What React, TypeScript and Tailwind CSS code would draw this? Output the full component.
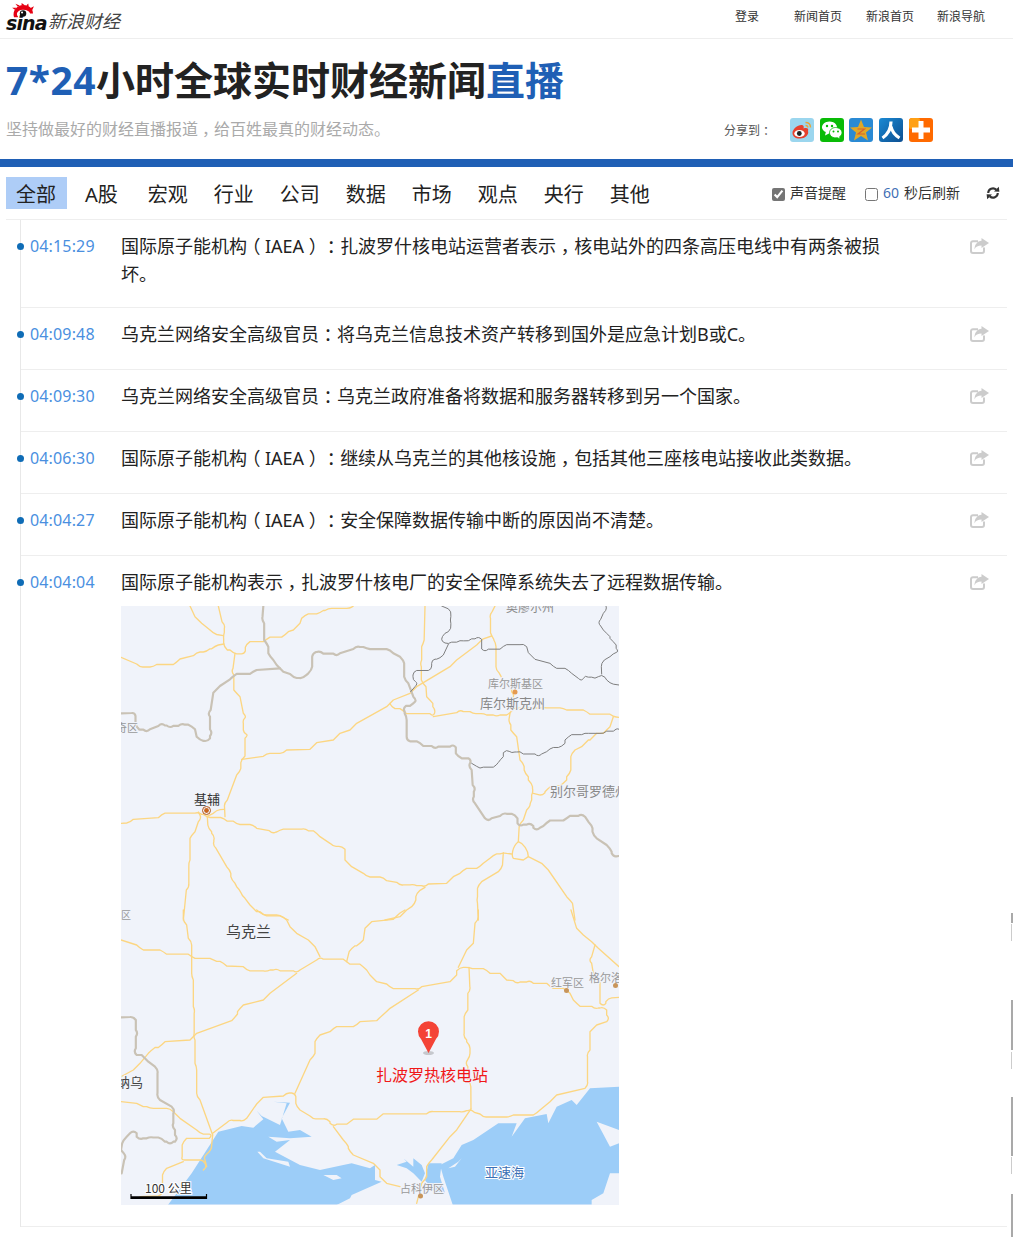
import React from "react";

const FONT = { fontFamily: '"Noto Sans", "Noto Sans CJK SC", sans-serif' };

function Punct({ text }: { text: string }) {
  const parts = text.split(/([（）：，])/);
  return (
    <>
      {parts.map((p, i) =>
        /^[（）：，]$/.test(p) ? (
          <span key={i} className="px-[0.25em] [font-feature-settings:'halt']">{p}</span>
        ) : (
          <React.Fragment key={i}>{p}</React.Fragment>
        )
      )}
    </>
  );
}

const ROWS = [
  { t: "04:15:29", x: "国际原子能机构（IAEA）：扎波罗什核电站运营者表示，核电站外的四条高压电线中有两条被损坏。", pb: "pb-[19px]" },
  { t: "04:09:48", x: "乌克兰网络安全高级官员：将乌克兰信息技术资产转移到国外是应急计划B或C。", pb: "pb-[21px]" },
  { t: "04:09:30", x: "乌克兰网络安全高级官员：乌克兰政府准备将数据和服务器转移到另一个国家。", pb: "pb-[21px]" },
  { t: "04:06:30", x: "国际原子能机构（IAEA）：继续从乌克兰的其他核设施，包括其他三座核电站接收此类数据。", pb: "pb-[21px]" },
  { t: "04:04:27", x: "国际原子能机构（IAEA）：安全保障数据传输中断的原因尚不清楚。", pb: "pb-[21px]" },
];

const TABS = ["全部", "A股", "宏观", "行业", "公司", "数据", "市场", "观点", "央行", "其他"];

const ROADS_TOP = [
  "M210,18 L235,60 L280,100 L310,107",
  "M295,18 L316,75 L310,107 L312,140 L340,160 L372,163 L380,132 L440,118 L495,105 L530,80 L555,45 L600,38 L625,25 L690,25 L700,18",
  "M3,172 L60,202 L100,200 L170,187 L230,157 L260,155 L285,138 L312,132",
  "M345,160 L333,215 L350,280 L380,350 L368,360 L372,400 L385,405 L365,478 L360,515 L312,610 L315,650",
  "M365,478 L440,460 L490,460 L580,438 L650,410 L700,380 L810,310 L880,270 L1000,190 L1080,125 L1115,108",
  "M915,18 L910,130 L900,190 L908,250 L930,300 L947,330 L940,350 L850,332 L815,320 L810,310",
  "M1125,18 L1108,45 L1115,108 L1128,130 L1128,210 L1165,260 L1185,285 L1170,340 L1130,350 L1090,340 L1060,342 L1020,328 L940,350",
  "M1170,340 L1165,365 L1180,400 L1210,490 L1215,520 L1235,550 L1240,575 L1230,610 L1230,620 L1200,670 L1195,725",
  "M1180,325 L1270,322 L1330,325 L1400,335 L1480,350 L1497,352",
  "M1480,350 L1460,390 L1420,410 L1395,430 L1355,460 L1350,520 L1330,550 L1285,565 L1265,588 L1240,580",
  "M3,670 L30,668 L125,643 L235,636 L260,650 L312,655 L350,672 L400,675 L458,702 L480,690 L555,685 L590,700 L640,740 L665,738 L685,790 L740,830 L790,832 L840,857 L880,852 L915,862 L990,840 L1030,810 L1080,800 L1120,765 L1150,758 L1175,762",
  "M235,636 L245,655 L215,705 L205,790 L208,860 L190,960",
  "M262,650 L265,685 L285,710 L278,735 L330,810 L335,840 L360,870 L365,885 L400,925 L430,945 L480,945 L505,960",
  "M1150,758 L1145,805 L1075,855 L1070,900 L1075,960",
  "M1195,725 C1175,740 1175,770 1180,775 L1210,780 L1225,770 C1225,750 1210,730 1195,725",
  "M1225,770 L1275,800 L1350,900 L1365,960",
  "M915,862 L890,880 L885,910 L850,940 L795,960",
  "M260,650 L290,630 L312,628",
];

const BORDERS_TOP = [
  "M430,18 L425,60 L440,130 L450,170 L480,205 L520,232 L548,236 L575,210 L578,160 L600,152 L650,170 L710,137 L740,145 L810,150 L850,180 L855,240 L890,300 L880,310 L848,325 L860,350 L860,420 L900,428 L945,448 L1000,432 L1015,470 L1055,480 L1045,500 L1068,565 L1055,600 L1105,665 L1150,638 L1185,645 L1200,680 L1230,668 L1250,693 L1280,668 L1340,655 L1385,640 L1415,675 L1420,705 L1470,745 L1480,770 L1497,768",
  "M480,205 L400,215 L340,228 L290,268 L262,340 L278,398 L262,425 L240,420 L215,378 L185,370 L150,385 L125,368 L80,398 L48,380 L45,338 L3,340",
];

const THIN_TOP = [
  "M965,18 L995,35 L990,60 L995,85 L965,110 L965,125 L985,133 L1020,120 L1045,125 L1075,108 L1095,157 L1150,138 L1210,130 L1235,168 L1300,200 L1345,210 L1385,245 L1395,225 L1425,238 L1445,222 L1470,250 L1497,255",
  "M985,133 L960,175 L935,180 L935,208 L880,215 L878,240 L895,250 L872,275",
  "M1445,222 L1443,190 L1480,160 L1497,155 L1480,125 L1460,100 L1432,68 L1460,30 L1458,18",
  "M1055,490 L1080,508 L1130,495 L1140,480 L1160,448 L1175,460 L1200,452 L1255,472 L1290,445 L1325,440 L1345,410 L1395,398 L1450,402 L1490,385 L1497,388",
];

const ROADS_BOTTOM = [
  "M190,0 L190,35 L215,95 L215,200 L225,300 L220,380 L230,470 L230,560 L278,675",
  "M3,90 L60,115 L130,125 L215,140 L280,150 L310,158 L380,180 L440,185 L470,175 L530,190 L600,140 L680,155 L730,170 L760,205 L810,232 L895,240 L1000,205 L1020,172 L1047,172 L1100,180 L1150,200 L1190,222 L1230,210 L1290,230 L1340,240 L1370,280 L1425,298 L1450,290 L1470,325 L1420,355 L1400,430 L1405,525 L1300,565 L1250,610 L1170,620 L1090,622 L1053,597 L1030,607 L930,603 L780,620 L690,635 L640,650 L620,625 L580,628 L530,590 L525,550 L500,548 L420,572 L370,635 L330,628 L278,670",
  "M410,0 L430,15 L490,20 L520,60 L575,100 L600,140",
  "M855,0 L830,18 L745,45 L720,100 L695,115 L680,155",
  "M1075,0 L1075,30 L1050,110 L1015,172",
  "M530,190 L440,260 L360,295 L345,322 L220,380 L125,405 L95,420 L50,470 L3,500",
  "M895,240 L800,305 L780,322 L710,345 L640,355 L590,385 L580,440 L525,550",
  "M1047,172 L1052,240 L1035,310 L1030,380 L1050,405 L1050,440 L1035,460 L1052,520 L1053,597",
  "M1353,0 L1380,65 L1425,105 L1497,170",
  "M1425,105 L1405,150 L1430,200 L1450,290 L1465,265 L1497,262",
  "M1053,597 L1000,670 L925,760 L915,810 L890,880",
  "M640,650 L680,700 L690,725 L770,770 L790,810 L840,830",
  "M3,575 L60,585 L90,595 L150,595 L170,615 L240,670 L278,675 L190,695 L183,750 L250,750 L260,770 L250,780",
  "M278,675 L270,725 L250,740 L260,770",
  "M190,755 L130,785 L125,855 L60,860",
];

const BORDERS_BOTTOM = [
  "M3,322 L40,320 L55,370 L40,425 L75,445 L115,480 L110,560 L165,600 L155,650 L175,685 L150,705 L125,685 L90,680 L60,690 L40,660 L10,690 L3,720",
  "M3,720 L20,740 L5,790",
];

function smooth(d: string) {
  if (d.includes("C")) return d;
  const n = d.match(/-?\d+(\.\d+)?/g)!.map(Number);
  const pts: [number, number][] = [];
  for (let i = 0; i < n.length; i += 2) pts.push([n[i], n[i + 1]]);
  let out = `M${pts[0][0]},${pts[0][1]}`;
  for (let i = 1; i < pts.length - 1; i++) {
    const mx = (pts[i][0] + pts[i + 1][0]) / 2;
    const my = (pts[i][1] + pts[i + 1][1]) / 2;
    const sx = pts[i][0] - Math.sign(pts[i][0] - pts[i - 1][0]) * Math.min(10, Math.abs(pts[i][0] - pts[i - 1][0]) / 2);
    const sy = pts[i][1] - Math.sign(pts[i][1] - pts[i - 1][1]) * Math.min(10, Math.abs(pts[i][1] - pts[i - 1][1]) / 2);
    const ex = pts[i][0] + Math.sign(mx - pts[i][0]) * Math.min(10, Math.abs(mx - pts[i][0]));
    const ey = pts[i][1] + Math.sign(my - pts[i][1]) * Math.min(10, Math.abs(my - pts[i][1]));
    out += ` L${sx},${sy} Q${pts[i][0]},${pts[i][1]} ${ex},${ey}`;
  }
  const last = pts[pts.length - 1];
  return out + ` L${last[0]},${last[1]}`;
}

function Logo() {
  return (
    <div className="relative ml-[6px] h-[38px] w-[120px]">
      <svg viewBox="0 0 24 20" className="absolute left-[6px] top-[3px] h-[19px] w-[23px]">
        <g fill="#e60012">
          <path d="M2 15 C0 8 5 2 12 2 C18 2 22 6 22 11 L19 11 C17 6 7 6 6 15 Z" />
          <path d="M3 7 L0 5 L4.5 5 Z M6 4 L3.5 0.8 L8 2.5 Z M10 2.5 L10 0 L13 2 Z M15 2.5 L17 0.5 L17.5 4 Z M19 5.5 L23 3.5 L21 8 Z" />
        </g>
        <ellipse cx="11.5" cy="11.5" rx="6.5" ry="4.5" fill="#fff" />
        <circle cx="11.5" cy="11" r="3.4" fill="#111" />
        <circle cx="10.5" cy="10" r="1.1" fill="#fff" />
      </svg>
      <span
        className="absolute left-0 top-[12px] text-[19px] font-bold italic leading-[22px] tracking-[-0.9px] text-[#111]"
        style={{ fontFamily: '"DejaVu Sans", sans-serif' }}
      >
        sina
      </span>
      <span className="absolute left-[42px] top-[10px] text-[18px] italic leading-[22px] text-[#444]">新浪财经</span>
    </div>
  );
}

function SocialIcons() {
  const box = "h-[24px] w-[24px] shrink-0 rounded-[3px]";
  return (
    <div className="flex">
      <svg viewBox="0 0 24 24" className={`${box} bg-[#9bd6ee]`}>
        <path d="M15.5 4.5 C18.5 4.5 20.5 6.5 20.5 9.5 M15.5 7.5 C16.8 7.5 17.8 8.3 17.8 9.6" fill="none" stroke="#e8a53a" strokeWidth="1.4" />
        <path d="M2.5 15 C2.5 11 8 6.5 12 7 C14 7.5 14 9 13.5 10.5 C17 9.5 19 10.5 18 13 C19.5 17 14 21 9.5 20.5 C5.5 20.5 2.5 18.5 2.5 15 Z" fill="#e6412d" />
        <ellipse cx="9.5" cy="15.5" rx="5.2" ry="3.6" fill="#fff" />
        <circle cx="9.3" cy="15.5" r="2.4" fill="#222" />
      </svg>
      <svg viewBox="0 0 24 24" className={`${box} ml-[6px] bg-[#09bb07]`}>
        <path d="M9.5 3.5 C14 3.5 17 6.3 17 9.5 C17 12.7 14 15.3 9.5 15.3 L5 17.5 L5.8 14 C3.5 13 2 11.3 2 9.5 C2 6.3 5 3.5 9.5 3.5 Z" fill="#fff" />
        <circle cx="7" cy="8" r="1.2" fill="#09bb07" />
        <circle cx="12" cy="8" r="1.2" fill="#09bb07" />
        <path d="M15.5 9.5 C19.2 9.5 22 12 22 14.8 C22 16.4 21 17.8 19.6 18.7 L20.2 21 L17.4 19.7 C13 20.5 9.5 18 9.5 14.8 C9.5 12 12 9.5 15.5 9.5 Z" fill="#fff" stroke="#09bb07" strokeWidth="0.8" />
        <circle cx="13.5" cy="13.5" r="1" fill="#09bb07" />
        <circle cx="18" cy="13.5" r="1" fill="#09bb07" />
      </svg>
      <svg viewBox="0 0 24 24" className={`${box} ml-[5px] bg-[#2a8ad4]`}>
        <path d="M12 1.5 L15 9 L23 9.5 L17 14.5 L19 22.5 L12 18 L5 22.5 L7 14.5 L1 9.5 L9 9 Z" fill="#e0a828" />
        <path d="M8.5 11 H15.5 L9 16 H16" fill="none" stroke="#d9622b" strokeWidth="1.2" />
      </svg>
      <svg viewBox="0 0 24 24" className={`${box} ml-[6px] bg-gradient-to-br from-[#1b8ad4] to-[#0d4f91]`}>
        <path d="M12 3.5 C12 11 8.5 16.5 3.5 20 M12 8.5 C13 14 16.5 17.5 20.5 20" fill="none" stroke="#fff" strokeWidth="3.2" />
      </svg>
      <svg viewBox="0 0 24 24" className={`${box} ml-[6px] bg-[#ff6a00]`}>
        <rect width="11" height="11" fill="#ffa015" rx="2" />
        <path d="M12 3 V21 M3 12 H21" stroke="#fff" strokeWidth="5" />
      </svg>
    </div>
  );
}

function Paths({ d, stroke, w }: { d: string[]; stroke: string; w: number }) {
  return (
    <>
      {d.map((p, i) => (
        <path key={i} d={smooth(p)} fill="none" stroke={stroke} strokeWidth={w} strokeLinejoin="round" strokeLinecap="round" />
      ))}
    </>
  );
}

const MAP_FONT = '"Noto Sans CJK SC", sans-serif';

function Label({ x, y, size, fill, text, halo = "#f0f3fa" }: { x: number; y: number; size: number; fill: string; text: string; halo?: string }) {
  return (
    <text x={x} y={y} fontSize={size} fill={fill} fontFamily={MAP_FONT} stroke={halo} strokeWidth={2} paintOrder="stroke">
      {text}
    </text>
  );
}

function MapView() {
  return (
    <svg viewBox="121 606 498 599" className="mt-[10px] block h-[599px] w-[498px] bg-[#f0f3fa]">
      <g transform="translate(120 910) scale(0.33333)">
        <path
          fill="#9ccdf8"
          d="M140,890 L215,790 L295,665 L365,648 L400,653 L430,628 L410,602 L425,618 L480,645 L500,580 L460,575 L510,578 L485,625 L505,665 L540,660 L575,680 L510,685 L445,680 L470,695 L510,690 L465,725 L540,765 L600,780 L670,765 L695,760 L750,775 L765,765 L765,810 L785,815 L695,855 L690,865 L640,890 Z"
        />
        <path fill="#f0f3fa" d="M412,725 L430,745 L510,770 L505,755 L440,745 L420,725 Z M610,795 L650,795 L665,805 L640,810 Z" />
        <path
          fill="#9ccdf8"
          d="M1000,890 L970,800 L960,765 L1000,745 L1025,705 L1060,690 L1135,640 L1190,640 L1175,680 L1215,625 L1280,612 L1285,640 L1310,590 L1355,570 L1370,585 L1410,535 L1497,530 L1497,660 L1430,635 L1470,710 L1497,700 L1497,790 L1470,790 L1450,850 L1415,870 L1415,890 Z"
        />
        <path fill="#f0f3fa" d="M985,775 L1015,755 L1025,745 L1005,770 Z" />
        <path
          fill="#9ccdf8"
          d="M830,765 L860,755 L850,745 L880,770 L880,745 L905,765 L915,790 L905,815 L880,790 L860,775 Z M925,760 L965,760 L960,800 L975,850 L935,840 L915,810 Z"
        />
        <rect x="3" y="882" width="1497" height="9" fill="#f0f3fa" fillOpacity="0.55" />
        <Paths d={ROADS_BOTTOM} stroke="#fcd682" w={4} />
        <Paths d={BORDERS_BOTTOM} stroke="#c9c2b5" w={6.5} />
      </g>
      <g transform="translate(120 600) scale(0.33333)">
        <Paths d={ROADS_TOP} stroke="#fcd682" w={4} />
        <Paths d={BORDERS_TOP} stroke="#c9c2b5" w={6.5} />
        <Paths d={THIN_TOP} stroke="#7d7d7d" w={3} />
      </g>

      <Label x={506} y={612} size={12} fill="#888" text="奥廖尔州" />
      <Label x={488} y={688} size={11} fill="#999" text="库尔斯基区" />
      <circle cx={515} cy={692} r={2.5} fill="#e49a50" />
      <Label x={480} y={708} size={13} fill="#888" text="库尔斯克州" />
      <Label x={116} y={732} size={11} fill="#999" text="奇区" />
      <Label x={194} y={804} size={13} fill="#333" text="基辅" />
      <circle cx={206.5} cy={810.5} r={4} fill="none" stroke="#b5591c" strokeWidth={1} />
      <circle cx={206.5} cy={810.5} r={2.4} fill="#c9651f" />
      <Label x={550} y={796} size={13} fill="#888" text="别尔哥罗德州" />
      <Label x={121} y={919} size={10} fill="#999" text="区" />
      <Label x={226} y={937} size={15} fill="#444" text="乌克兰" />
      <Label x={551} y={987} size={11} fill="#999" text="红军区" />
      <circle cx={566.5} cy={990.5} r={2.5} fill="#c8955a" />
      <Label x={589} y={982} size={11} fill="#999" text="格尔洛" />
      <circle cx={615.5} cy={985.5} r={2.5} fill="#c8955a" />
      <Label x={117} y={1087} size={13} fill="#444" text="纳乌" />
      <Label x={485} y={1177} size={13} fill="#3b6fb5" text="亚速海" halo="#ffffff" />
      <Label x={400} y={1193} size={11} fill="#999" text="占科伊区" />
      <circle cx={420.5} cy={1196} r={2.5} fill="#c8955a" />
      <Label x={376} y={1081} size={16} fill="#f01818" text="扎波罗热核电站" />

      <ellipse cx={428.5} cy={1053} rx={5.5} ry={2} fill="#c6c8cd" />
      <path d="M428.5 1053 L421 1039 A10.5 10.5 0 1 1 436 1039 Z" fill="#f44336" />
      <text x={428.5} y={1038} textAnchor="middle" fontSize={12} fontWeight={700} fill="#fff" fontFamily='"Liberation Sans", sans-serif'>
        1
      </text>

      <Label x={145} y={1193} size={12} fill="#333" text="100 公里" halo="#ffffff" />
      <path d="M131 1194 V1198.5 H206.5 V1194" fill="none" stroke="#000" strokeWidth={1.2} />
      <path d="M131 1197.5 H206.5" stroke="#000" strokeWidth={2.4} />
    </svg>
  );
}

function Time({ t }: { t: string }) {
  return <div className="w-[91px] shrink-0 pl-[9px] text-[16px] leading-[28px] tracking-[0.15px] text-[#4a8fdf]">{t}</div>;
}

function Dot() {
  return <span className="absolute left-[-4px] top-[23px] h-[7px] w-[7px] rounded-full bg-[#0f6cb6]" />;
}

function Share() {
  return (
    <svg viewBox="0 0 19 16" className="ml-auto mr-[18px] mt-[6px] h-[16px] w-[19px] shrink-0">
      <path d="M8 3.2 H3 A2 2 0 0 0 1 5.2 V13 A2 2 0 0 0 3 15 H12 A2 2 0 0 0 14 13 V9.5" fill="none" stroke="#cccccc" strokeWidth="2" />
      <path d="M11.5 0 L19 5 L11.5 10 V7.5 C8 7.5 5.5 8.5 4.5 11.5 C4.5 6.5 7.5 3.2 11.5 2.8 Z" fill="#cccccc" />
    </svg>
  );
}

function SyncIcon() {
  return (
    <svg viewBox="0 0 14 14" className="ml-[26px] mr-[7px] h-[14px] w-[14px] shrink-0">
      <path d="M2.2 7 A4.8 4.8 0 0 1 10.2 3.6 M11.8 7 A4.8 4.8 0 0 1 3.8 10.4" fill="none" stroke="#333" strokeWidth="2.1" />
      <path d="M8 5.6 L13.4 5.8 L12.8 0.8 Z M6 8.4 L0.6 8.2 L1.2 13.2 Z" fill="#333" />
    </svg>
  );
}

export default function App() {
  return (
    <div className="relative h-[1237px] w-[1013px] overflow-hidden bg-white text-[#222] [text-spacing-trim:space-all]" style={FONT}>
      {[
        "top-[913px] h-[10px]",
        "top-[1000px] h-[50px]",
        "top-[1097px] h-[59px]",
        "top-[1194px] h-[43px]",
      ].map((c) => (
        <span key={c} className={`absolute right-0 w-[2px] bg-[#a9a9a9] ${c}`} />
      ))}
      {["top-[924px]", "top-[1052px]", "top-[1157px]"].map((c) => (
        <span key={c} className={`absolute right-0 h-[17px] w-[2px] border-l border-[#ccc] ${c}`} />
      ))}

      <header className="flex h-[39px] items-start justify-between border-b border-[#eeeeee]">
        <Logo />
        <nav className="mr-[28px] flex pt-[8px] text-[12px] leading-[17px] text-[#333]">
          <a className="mr-[35px]">登录</a>
          <a className="mr-[24px]">新闻首页</a>
          <a className="mr-[23px]">新浪首页</a>
          <a>新浪导航</a>
        </nav>
      </header>

      <h1 className="ml-[6px] mt-[18px] text-[39px] font-bold leading-[46px] text-[#222]">
        <span className="tracking-[0.5px] text-[#1f5fb5]">7*24</span>小时全球实时财经新闻<span className="text-[#1f5fb5]">直播</span>
      </h1>

      <div className="mt-[15px] flex h-[24px] items-center pl-[6px] pr-[80px]">
        <p className="mb-[2px] text-[16px] text-[#aaaaaa]"><Punct text="坚持做最好的财经直播报道，给百姓最真的财经动态。" /></p>
        <span className="ml-auto mr-[18px] mt-[2px] text-[12px] text-[#555]"><Punct text="分享到：" /></span>
        <SocialIcons />
      </div>

      <div className="mt-[17px] h-[8px] bg-[#1f5fb5]" />

      <div className="mx-[6px] flex h-[53px] items-center border-b border-[#eeeeee] pb-[1px]">
        {TABS.map((tab, i) => (
          <span
            key={tab}
            className={
              i === 0
                ? "mr-[8px] h-[32px] bg-[#aecdf7] pl-[10px] pr-[11px] text-[20px] leading-[35px] text-[#222]"
                : i === 1
                ? "mr-[10px] h-[32px] px-[10px] text-[20px] leading-[35px] text-[#222]"
                : "mr-[6px] h-[32px] px-[10px] text-[20px] leading-[35px] text-[#222]"
            }
          >
            {tab}
          </span>
        ))}
        <label className="ml-auto flex items-center text-[14px] text-[#333]">
          <input type="checkbox" defaultChecked className="mr-[5px] mt-[4px] h-[13px] w-[13px] accent-[#757575]" />
          声音提醒
        </label>
        <label className="ml-[19px] flex items-center text-[14px] text-[#333]">
          <input type="checkbox" className="mr-[5px] mt-[4px] h-[13px] w-[13px]" />
          <span className="text-[#3f6fb5]">60</span>
          <span className="ml-[5px]">秒后刷新</span>
        </label>
        <SyncIcon />
      </div>

      <main className="ml-[20px] mr-[6px] border-l border-[#e8e8e8]">
        {ROWS.map((r) => (
          <div key={r.t} className={`relative flex border-b border-[#eeeeee] pt-[12px] ${r.pb}`}>
            <Dot />
            <Time t={r.t} />
            <p className="ml-[9px] w-[770px] text-[18px] leading-[28px] text-[#222]"><Punct text={r.x} /></p>
            <Share />
          </div>
        ))}
        <div className="relative flex border-b border-[#eeeeee] pb-[21px] pt-[12px]">
          <Dot />
          <Time t="04:04:04" />
          <div className="ml-[9px]">
            <p className="text-[18px] leading-[28px] text-[#222]"><Punct text="国际原子能机构表示，扎波罗什核电厂的安全保障系统失去了远程数据传输。" /></p>
            <MapView />
          </div>
          <Share />
        </div>
      </main>
    </div>
  );
}
